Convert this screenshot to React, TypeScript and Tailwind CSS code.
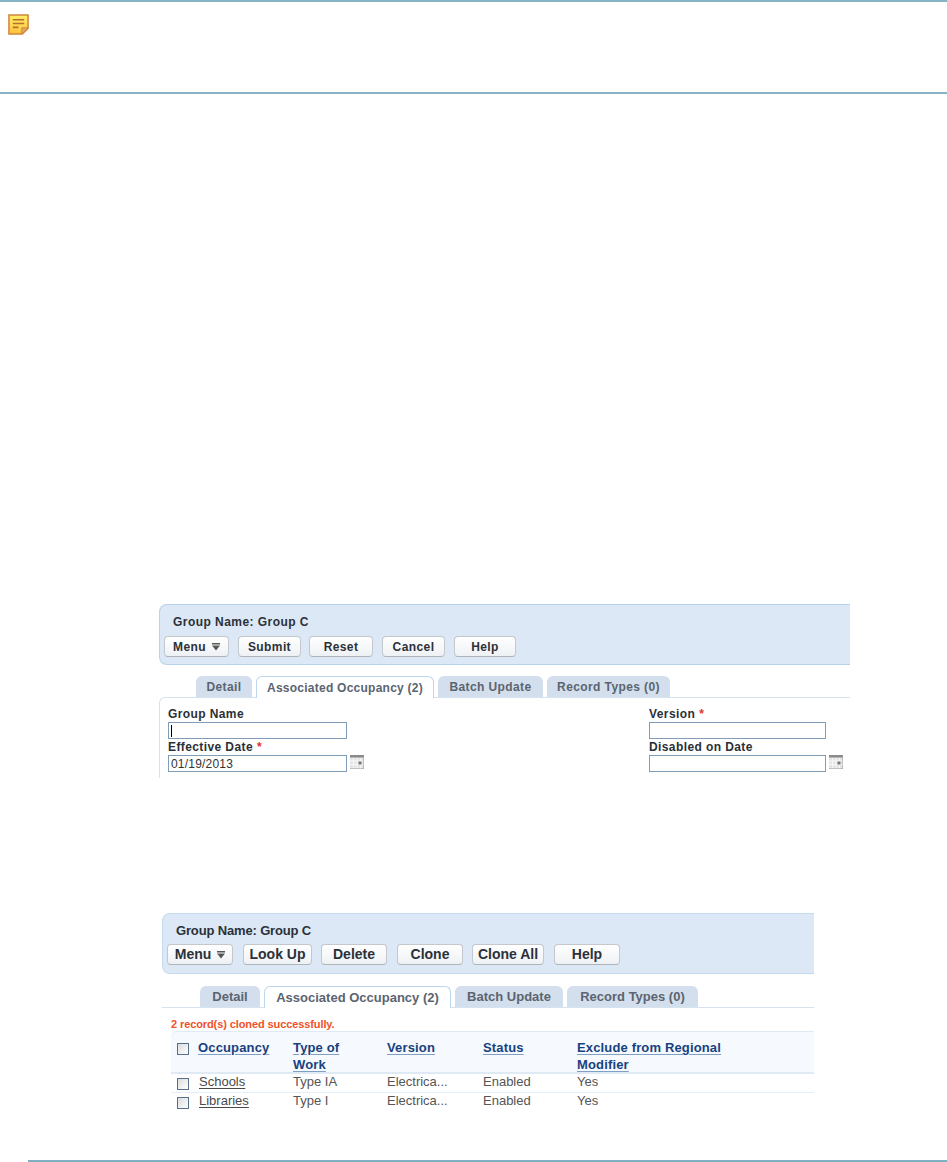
const font = "font-['Liberation_Sans',Arial,sans-serif]";

function NoteIcon() {
  return (
    <svg width="21" height="21" viewBox="0 0 22 22" className="block">
      <defs>
        <linearGradient id="note" x1="0" y1="0" x2="0" y2="1">
          <stop offset="0" stopColor="#fff06a" />
          <stop offset="1" stopColor="#ffc23c" />
        </linearGradient>
      </defs>
      <path d="M1 1h20v14l-6 6H1z" fill="url(#note)" stroke="#d0873c" strokeWidth="1.6" />
      <path d="M5 6h12M5 10h12M5 14h6" stroke="#b8702a" strokeWidth="1.6" />
      <path d="M14.5 21v-6.5H21z" fill="#e6ac5c" stroke="#c9853a" strokeWidth="1" />
    </svg>
  );
}

function CalendarIcon() {
  return (
    <svg width="14" height="14" viewBox="0 0 14 14" className="block">
      <rect x="0" y="0" width="14" height="14" fill="#e4e4e4" />
      <rect x="0" y="0" width="14" height="2.5" fill="#8a8a8a" />
      <path d="M3.5 3v11M7 3v11M10.5 3v11M0 6h14M0 9.5h14" stroke="#f7f7f7" strokeWidth="1" />
      <rect x="8.5" y="6.5" width="3" height="3" fill="#777" />
      <path d="M14 0v14H0" fill="none" stroke="#999" strokeWidth="1" />
    </svg>
  );
}

function Btn({ label, w, menu, big }: { label: string; w: string; menu?: boolean; big?: boolean }) {
  return (
    <div
      className={`flex h-[21px] items-center justify-center gap-1.5 rounded-[4px] border border-[#c4c8cc] border-b-[#b0b4b8] bg-gradient-to-b from-white to-[#eef1f4] font-bold text-[#2b3138] ${w} ${
        big ? "text-[14px]" : "text-[12px] tracking-[0.4px]"
      }`}
    >
      {label}
      {menu && (
        <svg width="8" height="8" viewBox="0 0 8 8">
          <path d="M0 0h8v1.5H0zM0 2.5h8L4 7.5z" fill="#555" />
        </svg>
      )}
    </div>
  );
}

function Tab({ label, w, active, big }: { label: string; w: string; active?: boolean; big?: boolean }) {
  const size = big ? "text-[13px]" : active ? "text-[12px] tracking-[0.25px]" : "text-[12px] tracking-[0.4px]";
  return (
    <div
      className={`flex h-[21px] items-center justify-center rounded-t-[6px] font-bold text-[#5b6470] ${w} ${size} ${
        active ? "mb-[-1px] h-[22px] border border-b-0 border-[#bcd6ee] bg-white" : "bg-[#d3dfec]"
      }`}
    >
      {label}
    </div>
  );
}

function Field({ label, req, value, cursor, calendar, w }: { label: string; req?: boolean; value?: string; cursor?: boolean; calendar?: boolean; w: string }) {
  return (
    <div>
      <div className="h-[16px] text-[12px] font-bold leading-[16px] tracking-[0.4px] text-[#2b2f36]">
        {label}
        {req && <span className="ml-1 text-[#e0342c]">*</span>}
      </div>
      <div className="flex items-start gap-[3px]">
        <div className={`flex h-[17px] items-center border border-[#7f9db9] bg-white pl-[2px] text-[12px] tracking-[0.2px] text-[#333] ${w}`}>
          {cursor && <span className="h-[12px] w-px bg-black" />}
          {value}
        </div>
        {calendar && <CalendarIcon />}
      </div>
    </div>
  );
}

const rows = [
  ["Schools", "Type IA", "Electrica...", "Enabled", "Yes"],
  ["Libraries", "Type I", "Electrica...", "Enabled", "Yes"],
];

const cols = "grid grid-cols-[27px_95px_94px_96px_94px_1fr]";

function HeadLink({ children }: { children: React.ReactNode }) {
  return <span className="font-bold tracking-[0.15px] text-[#17427f] underline decoration-[#7f9fc4] underline-offset-2">{children}</span>;
}

function Check({ top }: { top: string }) {
  return <span className={`ml-[6px] block h-[12px] w-[12px] border border-[#55708c] bg-gradient-to-br from-[#dcdcdc] to-white ${top}`} />;
}

export default function App() {
  return (
    <div className={`${font} h-[1162px] w-[947px] overflow-hidden bg-white`}>
      {/* top note */}
      <div className="h-[94px] border-y-2 border-[#86b4c4] pl-[8px] pt-[12px]">
        <NoteIcon />
      </div>

      {/* first screenshot */}
      <div className="ml-[159px] mt-[510px] w-[691px]">
        <div className="h-[61px] rounded-l-[8px] border-y border-l border-[#b6d2ec] bg-[#dce8f5] pl-[4px] pt-[9px]">
          <div className="ml-[9px] h-[22px] text-[12px] font-bold leading-[16px] tracking-[0.45px] text-[#2b3138]">Group Name: Group C</div>
          <div className="flex">
            <Btn label="Menu" w="w-[65px]" menu />
            <div className="ml-[9px]"><Btn label="Submit" w="w-[63px]" /></div>
            <div className="ml-[8px]"><Btn label="Reset" w="w-[64px]" /></div>
            <div className="ml-[9px]"><Btn label="Cancel" w="w-[63px]" /></div>
            <div className="ml-[9px]"><Btn label="Help" w="w-[62px]" /></div>
          </div>
        </div>
        <div className="mt-[11px] flex items-end gap-[4px] pl-[37px]">
          <Tab label="Detail" w="w-[56px]" />
          <Tab label="Associated Occupancy (2)" w="w-[178px]" active />
          <Tab label="Batch Update" w="w-[105px]" />
          <Tab label="Record Types (0)" w="w-[123px]" />
        </div>
        <div className="flex h-[81px] justify-between rounded-tl-[6px] border-t border-l border-[#d5e3f0] pl-[8px] pt-[8px]">
          <div className="flex flex-col">
            <Field label="Group Name" w="w-[179px]" cursor />
            <Field label="Effective Date" req w="w-[179px]" value="01/19/2013" calendar />
          </div>
          <div className="flex w-[201px] flex-col">
            <Field label="Version" req w="w-[177px]" />
            <Field label="Disabled on Date" w="w-[177px]" calendar />
          </div>
        </div>
      </div>

      {/* second screenshot */}
      <div className="ml-[162px] mt-[135px] w-[652px]">
        <div className="h-[61px] rounded-l-[8px] border-y border-l border-[#c4daef] bg-[#dce8f5] pl-[4px] pt-[9px]">
          <div className="ml-[9px] h-[21px] text-[13px] font-bold leading-[16px] tracking-[-0.15px] text-[#2b3138]">Group Name: Group C</div>
          <div className="flex">
            <Btn label="Menu" w="w-[66px]" menu big />
            <div className="ml-[10px]"><Btn label="Look Up" w="w-[69px]" big /></div>
            <div className="ml-[9px]"><Btn label="Delete" w="w-[66px]" big /></div>
            <div className="ml-[10px]"><Btn label="Clone" w="w-[66px]" big /></div>
            <div className="ml-[9px]"><Btn label="Clone All" w="w-[72px]" big /></div>
            <div className="ml-[10px]"><Btn label="Help" w="w-[66px]" big /></div>
          </div>
        </div>
        <div className="mt-[12px] flex items-end gap-[4px] pl-[38px]">
          <Tab label="Detail" w="w-[60px]" big />
          <Tab label="Associated Occupancy (2)" w="w-[187px]" active big />
          <Tab label="Batch Update" w="w-[108px]" big />
          <Tab label="Record Types (0)" w="w-[131px]" big />
        </div>
        <div className="border-t border-[#d5e3f0] pl-[9px]">
          <div className="h-[23px] pt-[10px] text-[11px] font-bold leading-[13px] tracking-[-0.1px] text-[#f0512a]">2 record(s) cloned successfully.</div>
          <div className={`${cols} h-[43px] rounded-tl-[6px] border-t border-b-2 border-[#e0eaf4] bg-[#f6f9fd] pt-[7px] text-[13px] leading-[17px]`}>
            <Check top="mt-[4px]" />
            <div><HeadLink>Occupancy</HeadLink></div>
            <div className="w-[60px]"><HeadLink>Type of Work</HeadLink></div>
            <div><HeadLink>Version</HeadLink></div>
            <div><HeadLink>Status</HeadLink></div>
            <div className="w-[170px]"><HeadLink>Exclude from Regional Modifier</HeadLink></div>
          </div>
          {rows.map((r, i) => (
            <div key={r[0]} className={`${cols} h-[19px] text-[13px] leading-[15px] text-[#555] ${i === 0 ? "border-b border-[#e6eef6]" : ""}`}>
              <Check top="mt-[4px]" />
              <div className="pl-[1px] text-[#4a4a4a] underline underline-offset-2">{r[0]}</div>
              <div>{r[1]}</div>
              <div>{r[2]}</div>
              <div>{r[3]}</div>
              <div>{r[4]}</div>
            </div>
          ))}
        </div>
      </div>

      {/* footer rule */}
      <div className="ml-[28px] mt-[48px] h-[2px] bg-[#7fb0c2]" />
    </div>
  );
}
